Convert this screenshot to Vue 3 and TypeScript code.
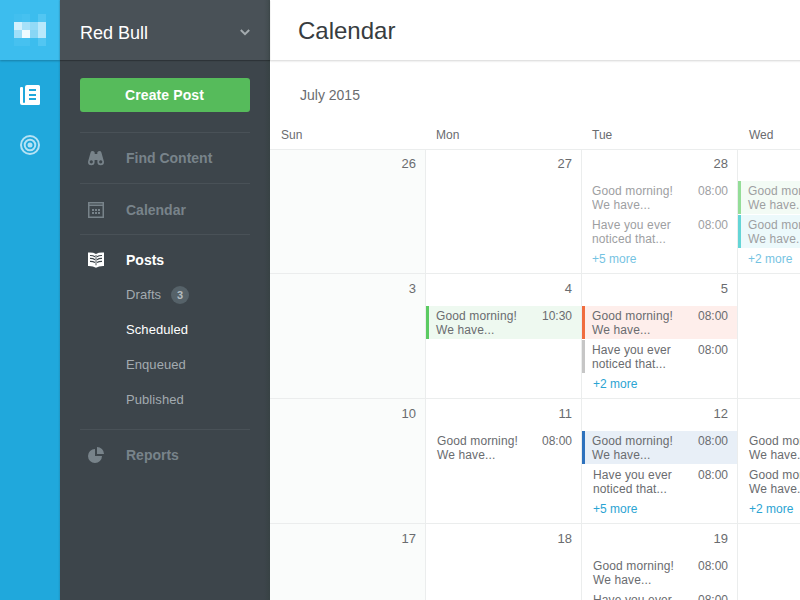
<script setup lang="ts">
interface Entry {
  lines: [string, string]
  time?: string
  tone?: 'green' | 'teal' | 'orange' | 'gray' | 'blue'
  nudge?: boolean
}
interface Day {
  date?: string
  entries?: Entry[]
  more?: string
  past?: boolean
  nudge?: boolean
}

const morning: [string, string] = ['Good morning!', 'We have...']
const noticed: [string, string] = ['Have you ever', 'noticed that...']

const weekdays: string[] = ['Sun', 'Mon', 'Tue', 'Wed']

const weeks: Day[][] = [
  [
    { date: '26' },
    { date: '27' },
    {
      date: '28',
      past: true,
      entries: [
        { lines: morning, time: '08:00' },
        { lines: noticed, time: '08:00' },
      ],
      more: '+5 more',
    },
    {
      past: true,
      entries: [
        { lines: morning, tone: 'green' },
        { lines: morning, tone: 'teal' },
      ],
      more: '+2 more',
    },
  ],
  [
    { date: '3' },
    { date: '4', entries: [{ lines: morning, time: '10:30', tone: 'green' }] },
    {
      date: '5',
      entries: [
        { lines: morning, time: '08:00', tone: 'orange' },
        { lines: noticed, time: '08:00', tone: 'gray' },
      ],
      more: '+2 more',
      nudge: true,
    },
    {},
  ],
  [
    { date: '10' },
    { date: '11', entries: [{ lines: morning, time: '08:00', nudge: true }] },
    {
      date: '12',
      entries: [
        { lines: morning, time: '08:00', tone: 'blue' },
        { lines: noticed, time: '08:00', nudge: true },
      ],
      more: '+5 more',
      nudge: true,
    },
    {
      entries: [
        { lines: morning, nudge: true },
        { lines: morning, nudge: true },
      ],
      more: '+2 more',
      nudge: true,
    },
  ],
  [
    { date: '17' },
    { date: '18' },
    {
      date: '19',
      entries: [
        { lines: morning, time: '08:00', nudge: true },
        { lines: noticed, time: '08:00', nudge: true },
      ],
    },
    {},
  ],
]

const logoTiles: string[] = [
  '#42bfef', '#46c1f0', '#3cbdee', '#52c6f2',
  '#d2f1fd', '#a6e1f9', '#92daf7', '#b9e8fb',
  '#9fdff9', '#f0fbff', '#88d6f5', '#b9e8fb',
  '#46c1f0', '#46c1f0', '#3cbdee', '#52c6f2',
]
</script>

<template>
  <div class="app">
    <aside class="rail">
      <div class="brand">
        <div class="logo">
          <i v-for="(c, i) in logoTiles" :key="i" :style="{ background: c }"></i>
        </div>
      </div>
      <svg class="rail-icon news" width="20" height="20" viewBox="0 0 20 20">
        <path fill="#fff" fill-rule="evenodd" d="M7 0H18.500Q20 0 20 1.500V18.500Q20 20 18.500 20H2Q0 20 0 18V3.200Q0 2 1.200 2H2Q3 2 3 3V17.300Q3 18 4 18Q5 18 5 17V2Q5 0 7 0ZM9 4V6H16V4ZM9 9V11H16V9ZM9 13V15H16V13Z" />
      </svg>
      <svg class="rail-icon" width="20" height="20" viewBox="0 0 20 20">
        <g fill="none" stroke="#b5e2f4" stroke-width="2">
          <circle cx="10" cy="10" r="9" />
          <circle cx="10" cy="10" r="5.300" stroke-width="2" />
        </g>
        <circle cx="10" cy="10" r="2.500" fill="#b5e2f4" />
      </svg>
    </aside>

    <aside class="side">
      <div class="account">
        <span>Red Bull</span>
        <svg width="10" height="7" viewBox="0 0 10 7">
          <path d="M.8 1L5 5.200L9.200 1" fill="none" stroke="#a4abaf" stroke-width="2" />
        </svg>
      </div>
      <div class="side-body">
        <button class="create">Create Post</button>
        <nav>
          <a class="item">
            <svg width="16" height="16" viewBox="0 0 16 16">
              <path fill="currentColor" fill-rule="evenodd" d="M2.600 2.400Q3 1 4.600 1Q6.400 1 6.700 2.500V4H9.300V2.500Q9.600 1 11.400 1Q13 1 13.400 2.400L15.500 10Q16 11.500 16 12A3.300 3.300 0 0 1 9.400 12V10H6.600V12A3.300 3.300 0 0 1 0 12Q0 11.500.5 10ZM3.300 10.300A1.600 1.600 0 1 0 3.310 10.300ZM12.700 10.300A1.600 1.600 0 1 0 12.710 10.300Z" />
            </svg>
            <span>Find Content</span>
          </a>
          <a class="item low">
            <svg width="16" height="16" viewBox="0 0 16 16">
              <path fill="currentColor" fill-rule="evenodd" d="M0 0H16V16H0ZM1.500 1.500V2.500H14.500V1.500ZM1.500 4V14.500H14.500V4Z" />
              <path fill="currentColor" d="M4 7h2v2H4zM7 7h2v2H7zM10 7h2v2h-2zM4 10h2v2H4zM7 10h2v2H7zM10 10h2v2h-2z" />
            </svg>
            <span>Calendar</span>
          </a>
          <div class="group">
            <a class="item active">
              <svg width="16" height="16" viewBox="0 0 16 16">
                <path fill="currentColor" d="M0 .6Q5 .2 8 2Q11 .2 16 .6V14Q11 13.800 8 15.800Q5 13.800 0 14Z" />
                <g fill="none" stroke="#3d454b" stroke-width="1.200">
                  <path d="M8 3V13.300" stroke-width=".9" />
                  <path d="M2 3.500Q5 3.400 7 4.800M2 6.400Q5 6.300 7 7.700M2 9.300Q5 9.200 7 10.600M14 3.500Q11 3.400 9 4.800M14 6.400Q11 6.300 9 7.700M14 9.300Q11 9.200 9 10.600" />
                </g>
              </svg>
              <span>Posts</span>
            </a>
            <a class="sub">Drafts <b class="badge">3</b></a>
            <a class="sub current">Scheduled</a>
            <a class="sub">Enqueued</a>
            <a class="sub">Published</a>
          </div>
          <a class="item">
            <svg width="16" height="16" viewBox="0 0 16 16">
              <path fill="currentColor" d="M7 2V9H14A7 7 0 1 1 7 2ZM9 0A7 7 0 0 1 16 7H9Z" />
            </svg>
            <span>Reports</span>
          </a>
        </nav>
      </div>
    </aside>

    <main class="main">
      <header class="top"><h1>Calendar</h1></header>
      <h2 class="month">July 2015</h2>
      <div class="row weekdays">
        <div v-for="w in weekdays" :key="w" class="weekday" :class="w.toLowerCase()">{{ w }}</div>
      </div>
      <div v-for="(week, wi) in weeks" :key="wi" class="row week">
        <div v-for="(day, di) in week" :key="di" class="day" :class="{ past: day.past }">
          <div class="date">{{ day.date }}</div>
          <div
            v-for="(e, ei) in day.entries"
            :key="ei"
            class="entry"
            :class="[e.tone, { nudge: e.nudge }]"
          >
            <div class="text">{{ e.lines[0] }}<br />{{ e.lines[1] }}</div>
            <time v-if="e.time">{{ e.time }}</time>
          </div>
          <a v-if="day.more" class="more" :class="{ nudge: day.nudge }">{{ day.more }}</a>
        </div>
      </div>
    </main>
  </div>
</template>

<style>
body {
  overflow: hidden;
}
</style>

<style scoped>
* {
  box-sizing: border-box;
}
.app {
  display: flex;
  width: 800px;
  height: 600px;
  overflow: hidden;
  background: #fff;
  font-family: 'Liberation Sans', Arial, sans-serif;
}
.rail {
  flex: none;
  width: 60px;
  background: linear-gradient(to left, rgba(0, 0, 0, 0.1), transparent 2px), #20a8dc;
  display: flex;
  flex-direction: column;
  align-items: center;
}
.brand {
  width: 60px;
  height: 60px;
  padding: 14px 14px 0;
  background: linear-gradient(to left, rgba(0, 0, 0, 0.1), transparent 2px), #3cbdee;
  box-shadow: 0 1px 2px rgba(0, 0, 0, 0.25);
}
.logo {
  display: grid;
  grid-template-columns: repeat(4, 8px);
  grid-auto-rows: 8px;
}
.rail-icon {
  display: block;
  margin-top: 30px;
}
.rail-icon.news {
  margin-top: 25px;
}
.side {
  flex: none;
  width: 210px;
  background: linear-gradient(to left, rgba(45, 60, 55, 0.35), transparent 6px), #3d454b;
}
.account {
  display: flex;
  align-items: center;
  justify-content: space-between;
  height: 60px;
  padding: 6px 20px 0;
  background: linear-gradient(to left, rgba(45, 60, 55, 0.3), transparent 6px), #495157;
  box-shadow: 0 1px 1px rgba(0, 0, 0, 0.25);
  color: #fff;
  font-size: 18px;
}
.account svg {
  margin-top: -2px;
}
.side-body {
  padding: 18px 20px 0;
}
.create {
  display: block;
  width: 170px;
  height: 34px;
  margin: 0 0 20px;
  padding: 0 1px 0 0;
  border: 0;
  border-radius: 3px;
  background: #56bb5b;
  color: #fff;
  font: bold 14px 'Liberation Sans', Arial, sans-serif;
  letter-spacing: 0.1px;
}
.item {
  display: flex;
  align-items: center;
  gap: 22px;
  height: 51px;
  padding-left: 8px;
  border-top: 1px solid #495157;
  color: #78838a;
  font-size: 14px;
  font-weight: bold;
}
.item.low {
  padding-top: 2px;
}
.group {
  height: 195px;
  border-top: 1px solid #495157;
}
.item.active {
  height: 42px;
  padding-top: 8px;
  border-top: 0;
  color: #fff;
}
.sub {
  display: flex;
  align-items: center;
  height: 35px;
  padding-left: 46px;
  color: #a3abb0;
  font-size: 13px;
  letter-spacing: 0.08px;
}
.sub.current {
  color: #fff;
}
.badge {
  width: 18px;
  height: 18px;
  margin-left: 10px;
  border-radius: 50%;
  background: #566269;
  color: #b4bcc0;
  font-size: 11px;
  line-height: 18px;
  text-align: center;
}
.main {
  flex: none;
  width: 624px;
  color: #6a6c6f;
}
.top {
  height: 60px;
  padding: 17px 28px 0;
  box-shadow: 0 1px 2px rgba(0, 0, 0, 0.17);
}
h1 {
  margin: 0;
  color: #373c40;
  font-size: 24px;
  font-weight: normal;
  line-height: 28px;
}
.month {
  height: 65px;
  margin: 0;
  padding: 27px 30px 0;
  font-size: 14px;
  font-weight: normal;
  line-height: 16px;
}
.row {
  display: grid;
  grid-template-columns: repeat(4, 156px);
}
.weekdays {
  height: 24px;
  font-size: 12px;
  line-height: 20px;
}
.weekday {
  padding-left: 10px;
}
.weekday.sun,
.weekday.wed {
  padding-left: 11px;
}
.week {
  height: 125px;
  border-top: 1px solid #ebeded;
}
.weekdays + .week {
  height: 124px;
}
.weekdays + .week .date {
  height: 31px;
  padding-top: 6px;
}
.day {
  border-right: 1px solid #ebeded;
}
.day:first-child {
  background: #fafcfb;
}
.date {
  height: 32px;
  padding: 7px 9px 0 0;
  font-size: 13px;
  line-height: 15px;
  text-align: right;
}
.entry {
  display: flex;
  justify-content: space-between;
  height: 33px;
  margin-bottom: 1px;
  padding: 3px 9px 0 7px;
  border-left: 3px solid transparent;
  font-size: 12px;
  line-height: 14px;
}
.text {
  letter-spacing: 0.12px;
}
.entry.nudge {
  padding-left: 8px;
}
.green {
  border-left-color: #5bcb62;
  background: #eef9f0;
}
.teal {
  border-left-color: #12bfc1;
  background: #e2f6f9;
}
.orange {
  border-left-color: #f06c3e;
  background: #feeeeb;
}
.gray {
  border-left-color: #c6c6c6;
}
.blue {
  border-left-color: #2e72bd;
  background: #e8eff7;
}
.more {
  display: block;
  padding: 3px 0 0 10px;
  color: #2ba4d3;
  font-size: 12px;
  line-height: 14px;
}
.more.nudge {
  padding-left: 11px;
}
.past .entry,
.past .more {
  opacity: 0.65;
}
</style>
